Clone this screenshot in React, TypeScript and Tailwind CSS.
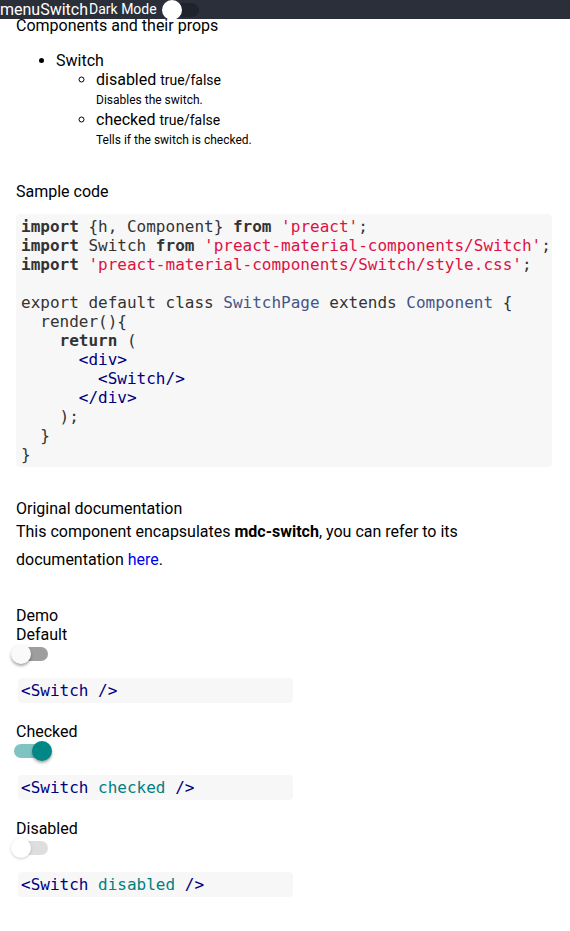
const mono = "font-['DejaVu_Sans_Mono',monospace]"

function Toggle({ checked = false, disabled = false }: { checked?: boolean; disabled?: boolean }) {
  const track = checked ? 'bg-[#7fc3c2]' : disabled ? 'bg-[#dedede]' : 'bg-[#9e9e9e]'
  const thumb = checked
    ? 'left-[18px] bg-[#018786] shadow-[0_2px_3px_rgba(0,0,0,0.35)]'
    : disabled
      ? 'left-[-3px] bg-white shadow-[0_1px_3px_rgba(0,0,0,0.2)]'
      : 'left-[-3px] bg-[#fafafa] shadow-[0_2px_3px_rgba(0,0,0,0.35)]'
  return (
    <div className="flex h-5 items-center pl-[14px]">
      <div className={`relative h-[14px] w-[34px] rounded-full ${track}`}>
        <div className={`absolute top-[-3px] h-5 w-5 rounded-full ${thumb}`} />
      </div>
    </div>
  )
}

function Snippet({ attr }: { attr?: string }) {
  return (
    <div className={`ml-[2px] mt-[14px] h-[25px] w-[275px] rounded-[4px] bg-[#f7f7f7] px-[3px] text-[16px] leading-[25px] text-[#000080] ${mono}`}>
      {'<Switch '}
      {attr && <span className="text-[#008080]">{attr} </span>}
      {'/>'}
    </div>
  )
}

function DemoItem({ label, checked, disabled, attr }: { label: string; checked?: boolean; disabled?: boolean; attr?: string }) {
  return (
    <div className="mb-[19px]">
      <div className="leading-[19px]">{label}</div>
      <div className="-ml-4">
        <Toggle checked={checked} disabled={disabled} />
      </div>
      <Snippet attr={attr} />
    </div>
  )
}

export default function App() {
  const kw = 'font-bold text-[#333]'
  const str = 'text-[#dd1144]'
  const cls = 'text-[#445588]'
  const tag = 'text-[#000080]'
  return (
    <div className="min-h-[931px] bg-white font-['Roboto',sans-serif] text-[16px] text-black">
      <header className="fixed left-0 right-0 top-0 z-10 flex h-[19px] items-center bg-[#2b2f3a] text-white">
        <span className="text-[16px] leading-[19px]">menuSwitch</span>
        <span className="ml-px text-[14px] leading-[19px]">Dark Mode</span>
        <div className="relative ml-[6px] h-[14px] w-[36px] rounded-full bg-[#1f232b]">
          <div className="absolute left-[-1px] top-[-3px] h-5 w-5 rounded-full bg-white" />
        </div>
      </header>

      <main className="px-4 pt-[16px]">
        <div className="leading-[19px]">Components and their props</div>

        <ul className="mt-[16px] list-disc pl-10">
          <li className="leading-[19px]">
            Switch
            <ul className="list-[circle] pl-10">
              <li>
                <div className="leading-[19px]">
                  disabled <span className="text-[14px]">true/false</span>
                </div>
                <div className="text-[12px] leading-[20px]">Disables the switch.</div>
              </li>
              <li>
                <div className="leading-[19px]">
                  checked <span className="text-[14px]">true/false</span>
                </div>
                <div className="text-[12px] leading-[20px]">Tells if the switch is checked.</div>
              </li>
            </ul>
          </li>
        </ul>

        <div className="mt-[32px] leading-[19px]">Sample code</div>

        <pre className={`mt-[13px] w-[536px] rounded-[4px] bg-[#f7f7f7] px-[5px] py-[3px] text-[16px] leading-[19px] text-[#333] ${mono}`}>
          <span className={kw}>import</span> {'{h, Component} '}<span className={kw}>from</span> <span className={str}>'preact'</span>;{'\n'}
          <span className={kw}>import</span> Switch <span className={kw}>from</span> <span className={str}>'preact-material-components/Switch'</span>;{'\n'}
          <span className={kw}>import</span> <span className={str}>'preact-material-components/Switch/style.css'</span>;{'\n'}
          {'\n'}
          export default class <span className={cls}>SwitchPage</span> extends <span className={cls}>Component</span> {'{\n'}
          {'  render(){\n'}
          {'    '}<span className={kw}>return</span>{' (\n'}
          {'      '}<span className={tag}>{'<div>'}</span>{'\n'}
          {'        '}<span className={tag}>{'<Switch/>'}</span>{'\n'}
          {'      '}<span className={tag}>{'</div>'}</span>{'\n'}
          {'    );\n'}
          {'  }\n'}
          {'}'}
        </pre>

        <div className="mt-[32px] leading-[19px]">Original documentation</div>
        <p className="leading-[28px]">
          This component encapsulates <b>mdc-switch</b>, you can refer to its documentation{' '}
          <a className="text-[#0000ee]">here</a>.
        </p>

        <div className="mt-[32px] leading-[19px]">Demo</div>
        <DemoItem label="Default" />
        <DemoItem label="Checked" checked attr="checked" />
        <DemoItem label="Disabled" disabled attr="disabled" />
      </main>
    </div>
  )
}
